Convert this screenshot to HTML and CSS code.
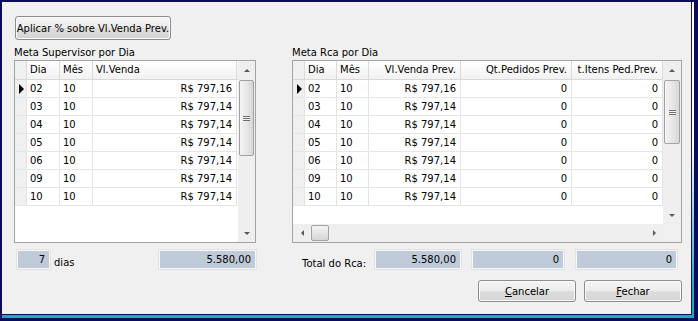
FILE: index.html
```html
<!DOCTYPE html>
<html lang="pt-BR">
<head>
    <meta charset="UTF-8">
    <title>Meta por Dia</title>
    <link rel="stylesheet" href="styles.css">
</head>
<body>
    <div class="frame">
        <div class="window">
            <button class="btn apply-btn" type="button">Aplicar % sobre Vl.Venda Prev.</button>

            <div class="panels">
                <!-- Meta do supervisor -->
                <div class="panel panel-left">
                    <div class="caption">Meta Supervisor por Dia</div>
                    <div class="grid">
                        <div class="grid-main">
                            <div class="table">
                                <div class="row head">
                                    <div class="c ind"></div>
                                    <div class="c w33">Dia</div>
                                    <div class="c w33">Mês</div>
                                    <div class="c w144">Vl.Venda</div>
                                </div>
                                <div class="row">
                                    <div class="c ind"><span class="cursor"></span></div>
                                    <div class="c w33">02</div>
                                    <div class="c w33">10</div>
                                    <div class="c w144 num">R$ 797,16</div>
                                </div>
                                <div class="row">
                                    <div class="c ind"></div>
                                    <div class="c w33">03</div>
                                    <div class="c w33">10</div>
                                    <div class="c w144 num">R$ 797,14</div>
                                </div>
                                <div class="row">
                                    <div class="c ind"></div>
                                    <div class="c w33">04</div>
                                    <div class="c w33">10</div>
                                    <div class="c w144 num">R$ 797,14</div>
                                </div>
                                <div class="row">
                                    <div class="c ind"></div>
                                    <div class="c w33">05</div>
                                    <div class="c w33">10</div>
                                    <div class="c w144 num">R$ 797,14</div>
                                </div>
                                <div class="row">
                                    <div class="c ind"></div>
                                    <div class="c w33">06</div>
                                    <div class="c w33">10</div>
                                    <div class="c w144 num">R$ 797,14</div>
                                </div>
                                <div class="row">
                                    <div class="c ind"></div>
                                    <div class="c w33">09</div>
                                    <div class="c w33">10</div>
                                    <div class="c w144 num">R$ 797,14</div>
                                </div>
                                <div class="row">
                                    <div class="c ind"></div>
                                    <div class="c w33">10</div>
                                    <div class="c w33">10</div>
                                    <div class="c w144 num">R$ 797,14</div>
                                </div>
                            </div>
                            <div class="vscroll">
                                <div class="arrow"><span class="tri-up"></span></div>
                                <div class="thumb thumb-left"><span class="grip"></span></div>
                                <div class="track"></div>
                                <div class="arrow"><span class="tri-down"></span></div>
                            </div>
                        </div>
                    </div>
                    <div class="summary">
                        <div class="field days">7</div>
                        <span class="days-label">dias</span>
                        <div class="field total-left">5.580,00</div>
                    </div>
                </div>

                <!-- Meta do RCA -->
                <div class="panel panel-right">
                    <div class="caption">Meta Rca por Dia</div>
                    <div class="grid">
                        <div class="grid-main short">
                            <div class="table">
                                <div class="row head">
                                    <div class="c ind"></div>
                                    <div class="c w32">Dia</div>
                                    <div class="c w32">Mês</div>
                                    <div class="c w92 num">Vl.Venda Prev.</div>
                                    <div class="c w111 num">Qt.Pedidos Prev.</div>
                                    <div class="c w91 num">t.Itens Ped.Prev.</div>
                                </div>
                                <div class="row">
                                    <div class="c ind"><span class="cursor"></span></div>
                                    <div class="c w32">02</div>
                                    <div class="c w32">10</div>
                                    <div class="c w92 num">R$ 797,16</div>
                                    <div class="c w111 num">0</div>
                                    <div class="c w91 num">0</div>
                                </div>
                                <div class="row">
                                    <div class="c ind"></div>
                                    <div class="c w32">03</div>
                                    <div class="c w32">10</div>
                                    <div class="c w92 num">R$ 797,14</div>
                                    <div class="c w111 num">0</div>
                                    <div class="c w91 num">0</div>
                                </div>
                                <div class="row">
                                    <div class="c ind"></div>
                                    <div class="c w32">04</div>
                                    <div class="c w32">10</div>
                                    <div class="c w92 num">R$ 797,14</div>
                                    <div class="c w111 num">0</div>
                                    <div class="c w91 num">0</div>
                                </div>
                                <div class="row">
                                    <div class="c ind"></div>
                                    <div class="c w32">05</div>
                                    <div class="c w32">10</div>
                                    <div class="c w92 num">R$ 797,14</div>
                                    <div class="c w111 num">0</div>
                                    <div class="c w91 num">0</div>
                                </div>
                                <div class="row">
                                    <div class="c ind"></div>
                                    <div class="c w32">06</div>
                                    <div class="c w32">10</div>
                                    <div class="c w92 num">R$ 797,14</div>
                                    <div class="c w111 num">0</div>
                                    <div class="c w91 num">0</div>
                                </div>
                                <div class="row">
                                    <div class="c ind"></div>
                                    <div class="c w32">09</div>
                                    <div class="c w32">10</div>
                                    <div class="c w92 num">R$ 797,14</div>
                                    <div class="c w111 num">0</div>
                                    <div class="c w91 num">0</div>
                                </div>
                                <div class="row">
                                    <div class="c ind"></div>
                                    <div class="c w32">10</div>
                                    <div class="c w32">10</div>
                                    <div class="c w92 num">R$ 797,14</div>
                                    <div class="c w111 num">0</div>
                                    <div class="c w91 num">0</div>
                                </div>
                            </div>
                            <div class="vscroll narrow">
                                <div class="arrow"><span class="tri-up"></span></div>
                                <div class="thumb thumb-right"><span class="grip"></span></div>
                                <div class="track"></div>
                                <div class="arrow"><span class="tri-down"></span></div>
                            </div>
                        </div>
                        <div class="hbar">
                            <div class="hscroll">
                                <div class="harrow"><span class="tri-left"></span></div>
                                <div class="hthumb"></div>
                                <div class="track"></div>
                                <div class="harrow"><span class="tri-right"></span></div>
                            </div>
                            <div class="corner"></div>
                        </div>
                    </div>
                    <div class="summary">
                        <span class="total-label">Total do Rca:</span>
                        <div class="field f-venda">5.580,00</div>
                        <div class="field f-ped">0</div>
                        <div class="field f-itens">0</div>
                    </div>
                </div>
            </div>

            <div class="actions">
                <button class="btn action-btn" type="button"><u>C</u>ancelar</button>
                <button class="btn action-btn" type="button"><u>F</u>echar</button>
            </div>
        </div>
    </div>
</body>
</html>
```

FILE: styles.css
```css
body {
    margin: 0;
    height: 321px;
    padding: 2px 4px 3px 2px;
    box-sizing: border-box;
    background-color: #0b0b5e;
    font-family: "DejaVu Sans", "Liberation Sans", sans-serif;
    font-size: 10px;
    color: #000;
    overflow: hidden;
}

/* moldura da janela */
.frame {
    height: 100%;
    box-sizing: border-box;
    padding: 0 2px 3px 0;
    background: linear-gradient(#ffffff, #ffffff 45%, #22a6c6 92%);
}

.window {
    height: 100%;
    box-sizing: border-box;
    background-color: #f0f0f0;
    border-right: 1px solid #1c1c3c;
    border-bottom: 1px solid #0b0b5e;
    padding: 14px 9px 0 12px;
    display: flex;
    flex-direction: column;
}

.btn {
    font-family: inherit;
    font-size: 10px;
    color: #000;
    border: 1px solid #8c8c8c;
    border-radius: 3px;
    background: linear-gradient(#f4f4f4, #ececec 48%, #dedede 52%, #d4d4d4);
    box-shadow: inset 0 0 0 1px #fbfbfb;
    padding: 0;
}

.apply-btn {
    align-self: flex-start;
    width: 156px;
    height: 24px;
    margin-left: 1px;
}

.panels {
    display: flex;
    gap: 36px;
    margin-top: 6px;
}

.panel-left {
    width: 242px;
}

.panel-right {
    width: 390px;
}

.caption {
    height: 14px;
    line-height: 14px;
}

/* grades */
.grid {
    height: 183px;
    box-sizing: border-box;
    border: 1px solid #a3a3a3;
    background-color: #fff;
    display: flex;
    flex-direction: column;
}

.grid-main {
    flex: 1;
    display: flex;
    min-height: 0;
}

.table {
    flex: 1;
    overflow: hidden;
}

.row {
    display: flex;
    height: 18px;
    box-sizing: border-box;
    border-bottom: 1px solid #e6e6e6;
}

.row.head {
    height: 19px;
    border-bottom: 1px solid #d8d8d8;
    background: linear-gradient(#ffffff, #f2f2f2);
}

.c {
    box-sizing: border-box;
    border-right: 1px solid #e4e4e4;
    padding: 0 3px;
    line-height: 17px;
    white-space: nowrap;
    overflow: hidden;
    flex-shrink: 0;
}

.head .c {
    line-height: 18px;
    border-right-color: #dadada;
}

.num {
    text-align: right;
    padding-right: 4px;
}

.ind {
    width: 12px;
    padding: 0;
    background-color: #f0f0f0;
    display: flex;
    align-items: center;
}

.cursor {
    margin-left: 4px;
    border-left: 5px solid #000;
    border-top: 5px solid transparent;
    border-bottom: 5px solid transparent;
}

.w32 { width: 32px; }
.w33 { width: 33px; }
.w91 { width: 91px; }
.w92 { width: 92px; }
.w111 { width: 111px; }
.w144 { width: 144px; }

/* barras de rolagem */
.vscroll {
    width: 17px;
    flex-shrink: 0;
    background-color: #efefef;
    display: flex;
    flex-direction: column;
}

.vscroll.narrow {
    width: 18px;
}

.arrow {
    height: 18px;
    display: flex;
    align-items: center;
    justify-content: center;
}

.track {
    flex: 1;
}

.tri-up {
    border-left: 3px solid transparent;
    border-right: 3px solid transparent;
    border-bottom: 3px solid #5a5a5a;
}

.tri-down {
    border-left: 3px solid transparent;
    border-right: 3px solid transparent;
    border-top: 3px solid #5a5a5a;
}

.thumb {
    margin: 1px 1px 0;
    box-sizing: border-box;
    border: 1px solid #a2a2a2;
    border-radius: 2px;
    background: linear-gradient(to right, #f5f5f5, #e6e6e6 55%, #d6d6d6);
    display: flex;
    align-items: center;
    justify-content: center;
}

.thumb-left {
    height: 76px;
}

.thumb-right {
    height: 64px;
}

.grip {
    width: 7px;
    height: 5px;
    background: repeating-linear-gradient(#6e6e6e 0 1px, #f4f4f4 1px 2px);
}

.hbar {
    height: 18px;
    display: flex;
}

.hscroll {
    flex: 1;
    display: flex;
    background-color: #efefef;
}

.harrow {
    width: 18px;
    display: flex;
    align-items: center;
    justify-content: center;
}

.hthumb {
    width: 16px;
    margin: 1px 0;
    border: 1px solid #a2a2a2;
    border-radius: 2px;
    background: linear-gradient(#f5f5f5, #e2e2e2 55%, #d6d6d6);
}

.tri-left {
    border-top: 3px solid transparent;
    border-bottom: 3px solid transparent;
    border-right: 3px solid #5a5a5a;
}

.tri-right {
    border-top: 3px solid transparent;
    border-bottom: 3px solid transparent;
    border-left: 3px solid #5a5a5a;
}

.corner {
    width: 18px;
    background-color: #f0f0f0;
}

/* totais */
.summary {
    display: flex;
    align-items: center;
    margin-top: 6px;
    height: 21px;
}

.field {
    height: 21px;
    box-sizing: border-box;
    background-color: #bfcbd8;
    border: 1px solid #e2e2e2;
    box-shadow: inset 0 0 0 1px #f7f7f7;
    text-align: right;
    padding-right: 5px;
    line-height: 19px;
}

.days {
    width: 35px;
    margin-left: 2px;
}

.days-label {
    margin-left: 3px;
    margin-top: 6px;
}

.total-left {
    width: 99px;
    margin-left: auto;
    margin-right: -1px;
}

.total-label {
    margin-left: 10px;
    margin-top: 7px;
    width: 72px;
}

.f-venda {
    width: 88px;
}

.f-ped {
    width: 94px;
    margin-left: 9px;
}

.f-itens {
    width: 103px;
    margin-left: 10px;
}

.actions {
    display: flex;
    justify-content: flex-end;
    gap: 8px;
    margin-top: 10px;
}

.action-btn {
    width: 98px;
    height: 22px;
}
```
